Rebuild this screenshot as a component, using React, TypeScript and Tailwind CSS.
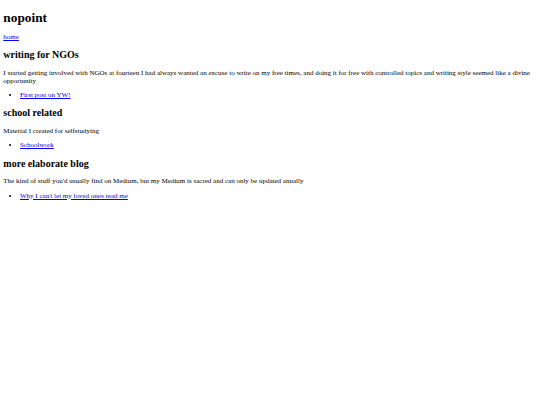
const sections = [
  {
    title: "writing for NGOs",
    blurb:
      "I started getting involved with NGOs at fourteen I had always wanted an excuse to write on my free times, and doing it for free with controlled topics and writing style seemed like a divine opportunity",
    links: ["First post on YW!"],
  },
  {
    title: "school related",
    blurb: "Material I created for selfstudying",
    links: ["Schoolwork"],
  },
  {
    title: "more elaborate blog",
    blurb:
      "The kind of stuff you'd usually find on Medium, but my Medium is sacred and can only be updated anually",
    links: ["Why I can't let my loved ones read me"],
  },
];

function Section({ title, blurb, links }: { title: string; blurb: string; links: string[] }) {
  return (
    <>
      <h2 className="mt-[7.6px] mb-[9.2px] text-[10px] font-bold leading-[11.5px]">{title}</h2>
      <p className="my-[6.67px]">{blurb}</p>
      <ul className="my-[6.4px] list-disc pl-[16.7px]">
        {links.map((l) => (
          <li key={l}>
            <a href="#" className="text-[#0000ee] underline">
              {l}
            </a>
          </li>
        ))}
      </ul>
    </>
  );
}

export default function App() {
  return (
    <div className="flow-root min-h-[405px] bg-white px-[3.33px] font-['Liberation_Serif',_'Times_New_Roman',_serif] text-[7px] leading-[7.67px] text-black">
      <h1 className="mt-[9.9px] mb-[8.93px] text-[13.33px] font-bold leading-[15.33px]">nopoint</h1>
      <p className="my-[6.67px]">
        <a href="#" className="text-[#0000ee] underline">
          home
        </a>
      </p>
      {sections.map((s) => (
        <Section key={s.title} {...s} />
      ))}
    </div>
  );
}
